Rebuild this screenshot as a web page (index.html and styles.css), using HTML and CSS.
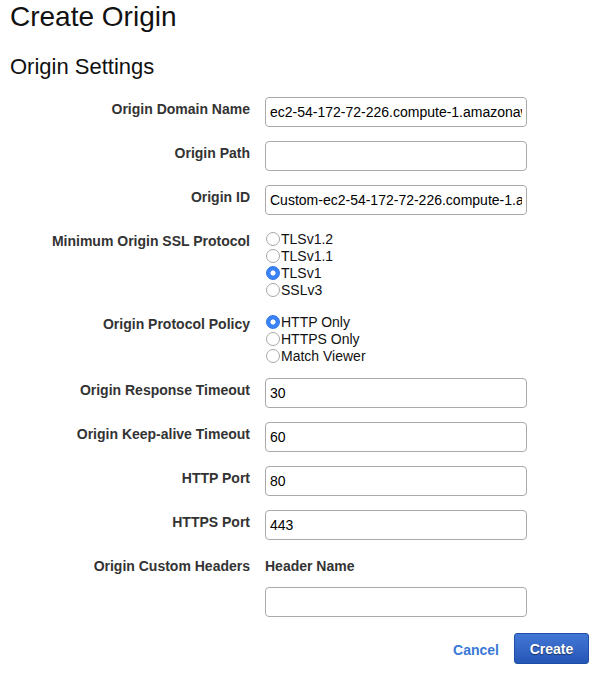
FILE: index.html
```html
<!DOCTYPE html>
<html>
<head>
<meta charset="utf-8">
<link rel="stylesheet" href="styles.css">
</head>
<body>
<h1 class="title">Create Origin</h1>
<h2 class="subtitle">Origin Settings</h2>
<form class="form">
  <div class="label">Origin Domain Name</div>
  <div class="field"><input class="text" type="text" value="ec2-54-172-72-226.compute-1.amazonaws.com"></div>

  <div class="label">Origin Path</div>
  <div class="field"><input class="text" type="text" value=""></div>

  <div class="label">Origin ID</div>
  <div class="field"><input class="text" type="text" value="Custom-ec2-54-172-72-226.compute-1.amazonaws.com"></div>

  <div class="label">Minimum Origin SSL Protocol</div>
  <div class="field radios">
    <label class="opt"><input class="radio" type="radio" name="ssl">TLSv1.2</label>
    <label class="opt"><input class="radio" type="radio" name="ssl">TLSv1.1</label>
    <label class="opt"><input class="radio" type="radio" name="ssl" checked>TLSv1</label>
    <label class="opt"><input class="radio" type="radio" name="ssl">SSLv3</label>
  </div>

  <div class="label">Origin Protocol Policy</div>
  <div class="field radios">
    <label class="opt"><input class="radio" type="radio" name="pp" checked>HTTP Only</label>
    <label class="opt"><input class="radio" type="radio" name="pp">HTTPS Only</label>
    <label class="opt"><input class="radio" type="radio" name="pp">Match Viewer</label>
  </div>

  <div class="label">Origin Response Timeout</div>
  <div class="field"><input class="text" type="text" value="30"></div>

  <div class="label">Origin Keep-alive Timeout</div>
  <div class="field"><input class="text" type="text" value="60"></div>

  <div class="label">HTTP Port</div>
  <div class="field"><input class="text" type="text" value="80"></div>

  <div class="label">HTTPS Port</div>
  <div class="field"><input class="text" type="text" value="443"></div>

  <div class="label">Origin Custom Headers</div>
  <div class="field headers">
    <div class="colhead">Header Name</div>
    <input class="text" type="text" value="">
  </div>
</form>
<div class="actions">
  <a class="cancel" href="#">Cancel</a>
  <button class="create" type="button">Create</button>
</div>
</body>
</html>
```
FILE: styles.css
```css
html, body {
  margin: 0;
  padding: 0;
  background: #ffffff;
  font-family: "Liberation Sans", Arial, Helvetica, sans-serif;
  color: #000;
}

.title {
  margin: 1px 0 0 10px;
  font-size: 28px;
  line-height: 32px;
  font-weight: normal;
  color: #111;
}

.subtitle {
  margin: 21px 0 0 10px;
  font-size: 22px;
  line-height: 26px;
  font-weight: normal;
  color: #111;
}

.form {
  display: grid;
  grid-template-columns: 250px 262px;
  column-gap: 15px;
  row-gap: 14px;
  margin-top: 17px;
}

.label {
  text-align: right;
  font-size: 14px;
  font-weight: bold;
  color: #333;
  line-height: 17px;
  padding-top: 4px;
}

.field {
  display: flex;
  flex-direction: column;
}

.text {
  box-sizing: border-box;
  width: 262px;
  height: 30px;
  margin: 0;
  padding: 0 4px;
  border: 1px solid #aaaaaa;
  border-radius: 4px;
  font-family: "Liberation Sans", Arial, sans-serif;
  font-size: 14px;
  color: #000;
  background: #fff;
  outline: none;
}

.radios {
  padding-top: 1px;
}

.opt {
  display: flex;
  align-items: center;
  height: 17px;
  font-size: 14px;
  color: #111;
}

.radio {
  appearance: none;
  -webkit-appearance: none;
  box-sizing: border-box;
  width: 14px;
  height: 14px;
  margin: 0 1px 0 1px;
  border: 1px solid #a8a8a8;
  border-radius: 50%;
  background: #fff;
}

.radio:checked {
  border-color: #2f73e8;
  background: radial-gradient(circle, #ffffff 0 2.2px, #3b82f6 2.9px);
}

.headers {
  gap: 12px;
}

.colhead {
  font-size: 14px;
  font-weight: bold;
  color: #333;
  line-height: 17px;
  padding-top: 4px;
}

.actions {
  display: flex;
  justify-content: flex-end;
  align-items: center;
  gap: 15px;
  width: 589px;
  margin-top: 16px;
}

.cancel {
  font-size: 14px;
  font-weight: bold;
  color: #3a78d6;
  text-decoration: none;
  padding-top: 3px;
}

.create {
  width: 75px;
  height: 31px;
  border: 1px solid #1f4ea6;
  border-radius: 3px;
  background: linear-gradient(#4277d6, #2656b5);
  color: #fff;
  font-family: "Liberation Sans", Arial, sans-serif;
  font-size: 14px;
  font-weight: bold;
  text-shadow: 0 1px 1px rgba(0, 0, 0, 0.5);
  padding: 0;
}
```
